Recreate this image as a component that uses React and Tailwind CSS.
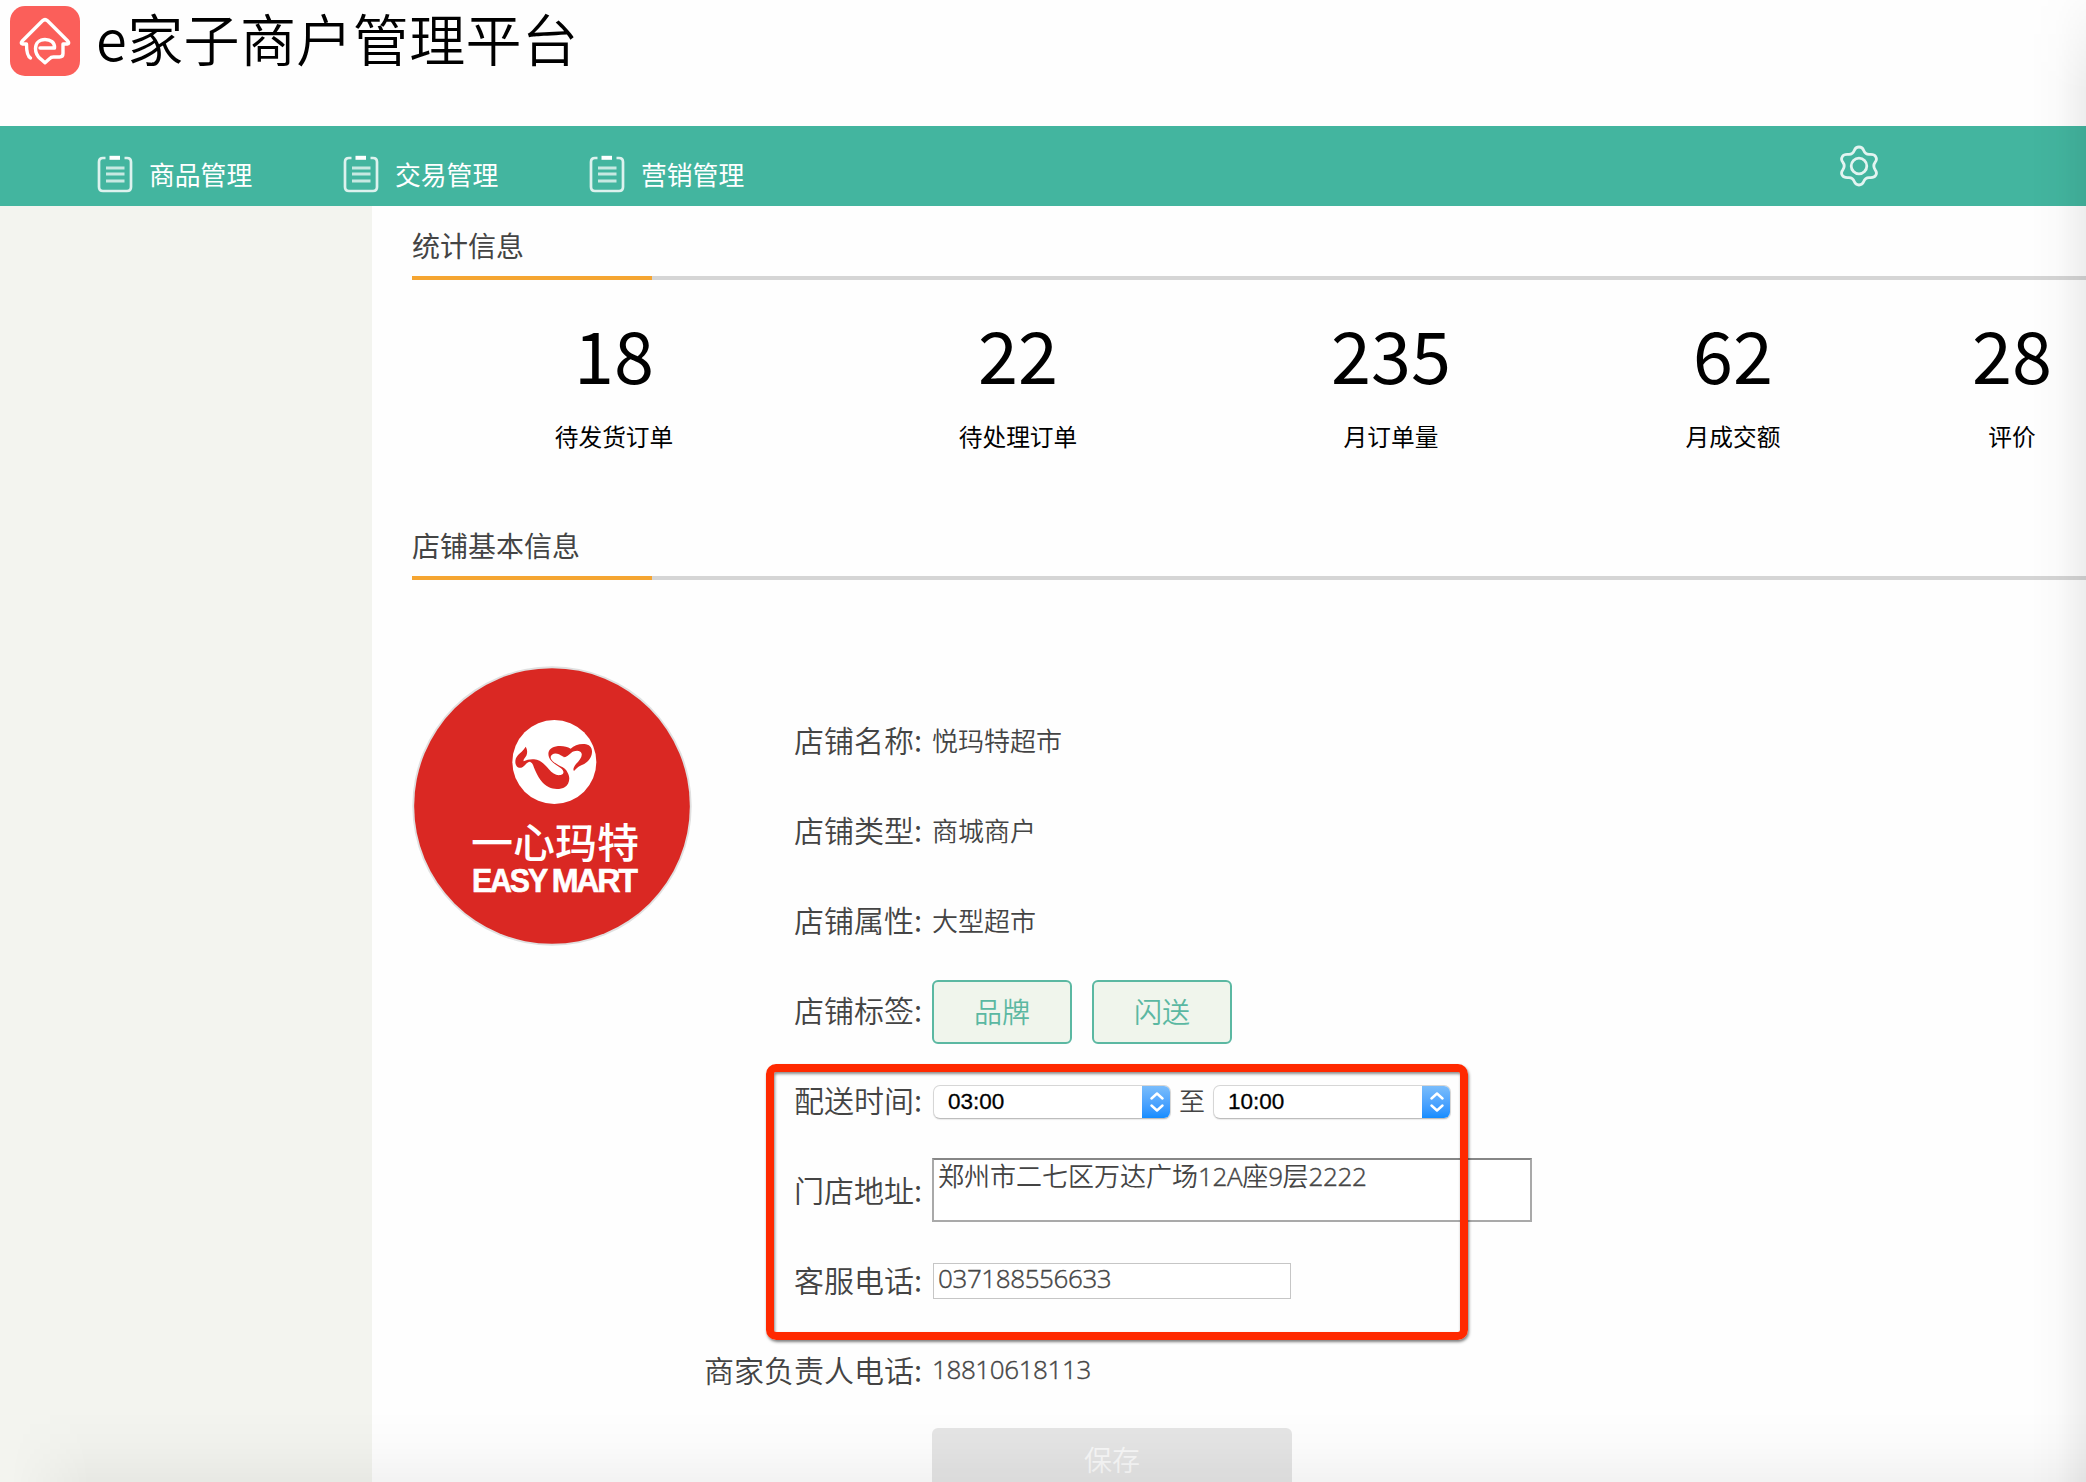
import React from "react";

const NAV = ["商品管理", "交易管理", "营销管理"];

const STATS = [
  { value: "18", label: "待发货订单", width: "w-[404px]" },
  { value: "22", label: "待处理订单", width: "w-[404px]" },
  { value: "235", label: "月订单量", width: "w-[342px]" },
  { value: "62", label: "月成交额", width: "w-[342px]" },
  { value: "28", label: "评价", width: "w-[216px]" },
];

function HouseLogo() {
  return (
    <svg className="block h-[70px] w-[70px]" viewBox="0 0 70 70" fill="none">
      <rect width="70" height="70" rx="15" fill="#fb5f5a" />
      <g stroke="#fff" strokeWidth="3.4" strokeLinecap="round" strokeLinejoin="round">
        <path d="M20.500 52C17.500 50.500 16.500 47 16.500 38H12.500C11 38 11 36.500 12 35.300L32.500 14.800Q35 12.500 37.500 14.800L58 35.300C59 36.500 59 38 57.500 38H53V47.500Q53 51 49.500 51H43.500Q41 51 39.500 52.800L35 56.800L30.500 52.800C27 50 25.500 46.500 25.500 42.500C25.500 37 29.500 33.500 35 33.500C40.500 33.500 45 36.500 44.500 42H30" />
      </g>
    </svg>
  );
}

function ClipboardIcon() {
  return (
    <svg className="block h-[38px] w-[36px]" viewBox="0 0 36 38" fill="none">
      <path
        d="M8.500 3H6Q2 3 2 7V32Q2 36 6 36H30Q34 36 34 32V7Q34 3 30 3H27.500"
        stroke="#fff"
        strokeOpacity=".82"
        strokeWidth="2.700"
      />
      <path d="M12.500 2.800H23" stroke="#fff" strokeWidth="4" />
      <path d="M9 13H27.500M9 19H27.500M9 26H27.500" stroke="#fff" strokeOpacity=".7" strokeWidth="3" />
    </svg>
  );
}

function GearIcon() {
  return (
    <svg className="block h-[42px] w-[40px]" viewBox="0 0 40 42" fill="none" stroke="#fff" strokeOpacity=".85" strokeWidth="2.800" strokeLinejoin="round">
      <path d="M20 2C22.500 2 23.800 3.200 24.600 5.200C25.800 8.200 27.500 9.600 30.500 9.400C33.500 9.100 35.300 9.300 36.600 11.400C38 13.600 37.700 15.300 36.200 17.200C34.300 19.800 34.300 22.200 36.200 24.800C37.700 26.700 38 28.400 36.600 30.600C35.300 32.700 33.500 32.900 30.500 32.600C27.500 32.400 25.800 33.800 24.600 36.800C23.800 38.800 22.500 40 20 40C17.500 40 16.200 38.800 15.400 36.800C14.200 33.800 12.500 32.400 9.500 32.600C6.500 32.900 4.700 32.700 3.400 30.600C2 28.400 2.300 26.700 3.800 24.800C5.700 22.200 5.700 19.800 3.800 17.200C2.300 15.300 2 13.600 3.400 11.400C4.700 9.300 6.500 9.100 9.500 9.400C12.500 9.600 14.200 8.200 15.400 5.200C16.200 3.200 17.500 2 20 2Z" />
      <circle cx="20" cy="21" r="7.800" />
    </svg>
  );
}

function StoreLogo() {
  return (
    <svg className="block h-[280px] w-[280px]" viewBox="36 33 840 840">
      <circle cx="456" cy="453" r="419" fill="#e0e0e0" />
      <circle cx="456" cy="453" r="413.500" fill="#da2823" />
      <circle cx="463" cy="321" r="126" fill="#fff" />
      <path
        fill="#da2823"
        d="M377 275C382 283 383 292 379 302C374 310 369 313 371 319C380 315 390 312 402 313C422 315 434 328 446 342C458 356 468 362 482 360C494 357 492 347 483 340C470 331 455 322 448 309C440 291 449 276 474 273C490 272 502 275 512 281C522 272 536 266 553 267C568 268 577 277 576 292C575 312 559 325 544 331C533 336 528 342 522 348C518 343 521 336 528 327C538 316 547 307 545 296C541 284 524 286 514 293C505 300 499 307 490 307C480 304 472 305 464 315C458 321 470 327 480 333C492 338 499 344 503 353C512 368 508 388 495 396C482 404 461 404 447 397C425 386 414 365 405 345C400 333 398 323 390 320C381 320 376 331 367 337C356 342 346 334 346 321C346 305 356 298 365 290C370 285 374 280 377 275Z"
      />
      <path fill="#fff" d="M452 305C454 296 466 292 477 298C484 302 489 306 494 306C486 311 478 312 474 318C470 323 466 327 462 322C457 317 451 312 452 305Z" />
      <text x="213" y="608" textLength="504" lengthAdjust="spacingAndGlyphs" fill="#fff" className="font-['Noto_Sans_CJK_SC',sans-serif] text-[124px] font-medium">
        一心玛特
      </text>
      <text x="216" y="711" textLength="222" lengthAdjust="spacingAndGlyphs" fill="#fff" stroke="#fff" strokeWidth="2" className="font-['Liberation_Sans',sans-serif] text-[100px] font-bold tracking-[-7px]">
        EASY
      </text>
      <text x="455" y="711" textLength="252" lengthAdjust="spacingAndGlyphs" fill="#fff" stroke="#fff" strokeWidth="2" className="font-['Liberation_Sans',sans-serif] text-[100px] font-bold tracking-[-7px]">
        MART
      </text>
    </svg>
  );
}

function SectionTitle({ children }) {
  return (
    <div>
      <h2 className="flex h-[70px] items-center pt-[7px] text-[28px] leading-none text-[#444]">{children}</h2>
      <div className="h-1 bg-[#d5d5d5]">
        <div className="h-1 w-60 bg-[#f5a531]" />
      </div>
    </div>
  );
}

function Row({ label, children }) {
  return (
    <div className="flex h-[90px] items-center">
      <div className="w-[230px] shrink-0 whitespace-nowrap pb-[5px] text-right text-[30px] leading-none">{label}:</div>
      <div className="ml-2.5 flex items-center text-[26px] leading-none">{children}</div>
    </div>
  );
}

function Digits({ children }) {
  return (
    <span className="font-['Open_Sans','Noto_Sans_CJK_SC',sans-serif] font-light tracking-[-0.4px] [-webkit-text-stroke:0.4px_#444]">
      {children}
    </span>
  );
}

function Tag({ children }) {
  return (
    <span className="relative top-px mr-5 flex h-16 w-[140px] items-center justify-center rounded-md border-2 border-[#5bb8a2] bg-[#f0f5ec] pb-0.5 text-[28px] text-[#5bb8a2]">
      {children}
    </span>
  );
}

function TimeSelect({ value }) {
  return (
    <div className="flex h-[34px] w-[238px] items-center justify-between overflow-hidden rounded-[7px] border border-[#d6d6d6] border-b-[#bdbdbd] bg-white shadow-[0_1px_1px_rgba(0,0,0,0.08)]">
      <span className="pl-3.5 pt-px font-['Liberation_Sans',sans-serif] text-[22.5px] font-normal text-black [-webkit-text-stroke:0.3px_black]">{value}</span>
      <span className="-my-px -mr-px flex h-[34px] w-[29px] items-center justify-center bg-linear-to-b from-[#7cbefb] to-[#0a8bff]">
        <svg className="h-[20px] w-[14px]" viewBox="0 0 14 20" fill="none" stroke="#fff" strokeWidth="2.400" strokeLinecap="round" strokeLinejoin="round">
          <path d="M1.500 6.500L7 1.500L12.500 6.500M1.500 13.500L7 18.500L12.500 13.500" />
        </svg>
      </span>
    </div>
  );
}

export default function App() {
  return (
    <div className="relative h-[1482px] w-full overflow-hidden bg-[#fefefe] font-['Noto_Sans_CJK_SC',sans-serif] text-[#444]">
      <header className="flex h-[126px] items-start pl-2.5 pt-1.5">
        <HouseLogo />
        <h1 className="ml-4 mt-[3px] whitespace-nowrap text-[56px] font-[350] leading-[56px] tracking-[0.4px] text-black">
          e家子商户管理平台
        </h1>
      </header>

      <nav className="flex h-20 items-center bg-[#43b59f] pl-[97px]">
        {NAV.map((item) => (
          <a key={item} className="flex w-[246px] items-center pt-4 text-[25.8px] leading-none text-white">
            <ClipboardIcon />
            <span className="ml-4 pb-px">{item}</span>
          </a>
        ))}
        <span className="ml-[1004px]">
          <GearIcon />
        </span>
      </nav>

      <div className="flex h-[1276px]">
        <aside className="w-[372px] shrink-0 bg-[#f3f4ef]" />
        <main className="flex-1 overflow-hidden pl-10">
          <SectionTitle>统计信息</SectionTitle>
          <div className="flex h-[226px] w-[1708px] pt-[31px]">
            {STATS.map((s) => (
              <div key={s.label} className={`flex shrink-0 flex-col items-center text-black ${s.width}`}>
                <span className="text-[72px] leading-[84px]">{s.value}</span>
                <span className="mt-7 text-[23.7px] leading-[26px]">{s.label}</span>
              </div>
            ))}
          </div>

          <SectionTitle>店铺基本信息</SectionTitle>
          <div className="flex">
            <div className="mt-[86px]">
              <StoreLogo />
            </div>
            <div className="relative mt-[116px] font-[350]">
              <Row label="店铺名称">
                <span className="pb-0.5">悦玛特超市</span>
              </Row>
              <Row label="店铺类型">
                <span className="pb-0.5">商城商户</span>
              </Row>
              <Row label="店铺属性">
                <span className="pb-[3px]">大型超市</span>
              </Row>
              <Row label="店铺标签">
                <Tag>品牌</Tag>
                <Tag>闪送</Tag>
              </Row>
              <Row label="配送时间">
                <div className="ml-px flex items-center pt-0.5">
                  <TimeSelect value="03:00" />
                  <span className="mx-2 pb-1">至</span>
                  <TimeSelect value="10:00" />
                </div>
              </Row>
              <Row label="门店地址">
                <div className="mb-0.5 h-16 w-[600px] border-2 border-[#a9a9a9] border-t-[#868686] bg-white pl-1 pt-0.5">
                  郑州市二七区万达广场<Digits>12A</Digits>座<Digits>9</Digits>层<Digits>2222</Digits>
                </div>
              </Row>
              <Row label="客服电话">
                <div className="ml-px h-9 w-[358px] border border-[#c6c6c6] bg-white pl-1">
                  <Digits>037188556633</Digits>
                </div>
              </Row>
              <Row label="商家负责人电话">
                <span className="pb-1.5">
                  <Digits>18810618113</Digits>
                </span>
              </Row>
              <button className="ml-60 mt-3 flex h-16 w-[360px] items-center justify-center rounded-md bg-[#e5e5e5] pb-[3px] text-[28px] leading-none text-[#f8f8f8]">
                保存
              </button>
              <div className="pointer-events-none absolute left-[74px] top-[368px] h-[276px] w-[702px] rounded-[10px] border-8 border-[#ff2900] shadow-[1px_2px_3px_rgba(0,0,0,0.5),inset_1px_2px_3px_rgba(0,0,0,0.45)]" />
            </div>
          </div>
        </main>
      </div>

      <div className="pointer-events-none absolute right-0 top-0 h-full w-14 bg-linear-to-r from-transparent via-black/[0.015] to-black/[0.065] mask-[linear-gradient(to_bottom,rgba(0,0,0,0.2),black_90px)]" />
      <div className="pointer-events-none absolute bottom-0 left-0 h-[72px] w-full bg-linear-to-b from-transparent via-black/[0.015] to-black/[0.045] mask-[linear-gradient(to_right,transparent_10px,black_90px)]" />
    </div>
  );
}
